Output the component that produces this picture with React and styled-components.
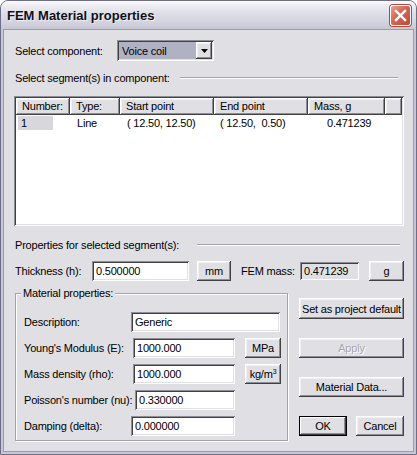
import React from "react";
import styled, { createGlobalStyle, css } from "styled-components";

const Global = createGlobalStyle`
  html, body { margin: 0; padding: 0; background: #ffffff; overflow: hidden; }
  * { box-sizing: border-box; }
  body { font-family: "Liberation Sans", Arial, sans-serif; font-size: 11px; color: #000; }
`;

const FONT = css`
  font-family: "Liberation Sans", Arial, sans-serif;
  font-size: 11px;
  letter-spacing: -0.2px;
  color: #000;
`;

const raised = css`
  box-shadow: inset -1px -1px 0 #404040, inset 1px 1px 0 #ffffff,
    inset -2px -2px 0 #8e8e96, inset 2px 2px 0 #f1f0f3;
`;

const sunken = css`
  box-shadow: inset 1px 1px 0 #8e8e96, inset -1px -1px 0 #ffffff,
    inset 2px 2px 0 #404040, inset -2px -2px 0 #e0dfe3;
`;

const Window = styled.div`
  width: 417px;
  height: 455px;
  display: flex;
  flex-direction: column;
  border: 1px solid #6e6e88;
  border-radius: 8px 8px 0 0;
  background: #c6c6d6;
  overflow: hidden;
`;

const TitleBar = styled.div`
  height: 28px;
  flex-shrink: 0;
  display: flex;
  align-items: center;
  justify-content: space-between;
  padding: 0 5px 0 6px;
  background: linear-gradient(
    to bottom,
    #fbfbfd 0%,
    #ececf2 18%,
    #dedee8 45%,
    #d4d4e0 75%,
    #c6c6d6 100%
  );
`;

const Title = styled.span`
  font-family: "Liberation Sans", Arial, sans-serif;
  font-weight: bold;
  font-size: 13px;
  color: #101018;
  text-shadow: 1px 1px 0 rgba(255, 255, 255, 0.6);
  padding-top: 1px;
`;

const CloseButton = styled.div`
  width: 21px;
  height: 21px;
  margin-top: 1px;
  border-radius: 3px;
  border: 1px solid #ffffff;
  background: linear-gradient(135deg, #e7a394 0%, #d66a58 40%, #c24634 100%);
  box-shadow: 0 0 0 1px #b04a40;
  display: flex;
  align-items: center;
  justify-content: center;
`;

const Client = styled.div`
  flex: 1;
  margin: 0 2px 2px 2px;
  border: 1px solid #9a9ab0;
  background: #e0dfe3;
  padding: 10px 9px 0 11px;
  display: flex;
  flex-direction: column;
`;

const Row = styled.div`
  display: flex;
  align-items: center;
  height: ${(p) => p.$h || 20}px;
  margin-top: ${(p) => p.$mt || 0}px;
  flex-shrink: 0;
`;

const Label = styled.span`
  ${FONT};
  white-space: nowrap;
  width: ${(p) => (p.$w ? `${p.$w}px` : "auto")};
  margin-left: ${(p) => p.$ml || 0}px;
  flex-shrink: 0;
`;

const Combo = styled.div`
  ${sunken};
  width: 97px;
  height: 21px;
  margin-left: ${(p) => p.$ml}px;
  background: #b0b1c2;
  display: flex;
  align-items: center;
  padding: 2px 2px 2px 5px;
`;

const ComboText = styled.span`
  ${FONT};
  flex: 1;
`;

const ComboArrow = styled.div`
  ${raised};
  width: 16px;
  height: 17px;
  background: #e0dfe3;
  display: flex;
  align-items: center;
  justify-content: center;
`;

const Heading = styled.div`
  display: flex;
  align-items: center;
  height: 14px;
  margin-top: ${(p) => p.$mt}px;
  flex-shrink: 0;
`;

const HeadingLine = styled.div`
  flex: 1;
  height: 2px;
  margin-left: ${(p) => p.$gap}px;
  margin-right: ${(p) => p.$mr}px;
  border-top: 1px solid #a2a2aa;
  border-bottom: 1px solid #ffffff;
`;

const ListBox = styled.div`
  ${sunken};
  margin: 11px 0 0 -1px;
  width: 390px;
  height: 130px;
  background: #ffffff;
  padding: 2px;
  flex-shrink: 0;
`;

const HeaderRow = styled.div`
  display: flex;
  height: 17px;
`;

const HeaderCell = styled.div`
  ${raised};
  ${FONT};
  width: ${(p) => p.$w}px;
  flex: ${(p) => (p.$grow ? 1 : "none")};
  background: #e0dfe3;
  padding: 0 0 0 6px;
  line-height: 17px;
  white-space: nowrap;
  overflow: hidden;
`;

const DataRow = styled.div`
  display: flex;
  height: 14px;
  margin-top: 1px;
`;

const DataCell = styled.div`
  ${FONT};
  width: ${(p) => p.$w}px;
  padding-left: ${(p) => p.$pl}px;
  line-height: 14px;
  white-space: pre;
`;

const Selected = styled.span`
  display: inline-block;
  width: 35px;
  height: 14px;
  margin-left: 2px;
  padding-left: 3px;
  background: #d8d8dc;
`;

const TextField = styled.div`
  ${sunken};
  ${FONT};
  width: ${(p) => p.$w}px;
  height: ${(p) => p.$h || 20}px;
  margin-left: ${(p) => p.$ml || 0}px;
  background: ${(p) => (p.$readonly ? "#e0dfe3" : "#ffffff")};
  padding: 0 0 0 4px;
  line-height: ${(p) => p.$h || 20}px;
  flex-shrink: 0;
  white-space: nowrap;
`;

const Button = styled.div`
  ${FONT};
  ${(p) =>
    p.$default
      ? css`
          box-shadow: inset 0 0 0 1px #000000, inset -2px -2px 0 #404040,
            inset 2px 2px 0 #ffffff, inset -3px -3px 0 #8e8e96;
        `
      : raised};
  width: ${(p) => (p.$w ? `${p.$w}px` : "auto")};
  height: ${(p) => p.$h || 20}px;
  margin-left: ${(p) => p.$ml || 0}px;
  background: #e0dfe3;
  display: flex;
  align-items: center;
  justify-content: center;
  white-space: nowrap;
  flex-shrink: 0;
  color: ${(p) => (p.$disabled ? "#a6a6ae" : "#000")};
  text-shadow: ${(p) => (p.$disabled ? "1px 1px 0 #ffffff" : "none")};
`;

const Bottom = styled.div`
  display: grid;
  grid-template-columns: 273px 105px;
  column-gap: 11px;
  margin-top: 5px;
  align-items: start;
`;

const Group = styled.fieldset`
  margin: 0;
  min-width: 0;
  padding: 12px 7px 4px 8px;
  border: 1px solid #a2a2aa;
  box-shadow: inset 1px 1px 0 #ffffff, 1px 1px 0 #ffffff;
  display: flex;
  flex-direction: column;
  gap: 6px;
`;

const Legend = styled.legend`
  ${FONT};
  line-height: 14px;
  padding: 0 2px;
  margin-left: -3px;
  background: #e0dfe3;
`;

const SideColumn = styled.div`
  display: flex;
  flex-direction: column;
  padding-top: 12px;
  gap: 19px;
`;

const ButtonPair = styled.div`
  display: flex;
  justify-content: space-between;
`;

const Sup = styled.sup`
  font-size: 7px;
  vertical-align: 4px;
  line-height: 0;
`;

const columns = [
  { title: "Number:", w: 54 },
  { title: "Type:", w: 50 },
  { title: "Start point", w: 94 },
  { title: "End point", w: 94 },
  { title: "Mass, g", w: 77 },
];

const materialRows = [
  { label: "Description:", value: "Generic", ml: 0, w: 149 },
  { label: "Young's Modulus (E):", value: "1000.000", ml: 2, w: 102, unit: "MPa" },
  { label: "Mass density (rho):", value: "1000.000", ml: 2, w: 102, unit: "kg/m3" },
  { label: "Poisson's number (nu):", value: "0.330000", ml: 4, w: 100 },
  { label: "Damping (delta):", value: "0.000000", ml: 0, w: 104 },
];

export default function App() {
  return (
    <>
      <Global />
      <Window>
        <TitleBar>
          <Title>FEM Material properties</Title>
          <CloseButton>
            <svg width="13" height="13" viewBox="0 0 13 13">
              <path
                d="M2 2 L11 11 M11 2 L2 11"
                stroke="#ffffff"
                strokeWidth="2.4"
                strokeLinecap="square"
              />
            </svg>
          </CloseButton>
        </TitleBar>
        <Client>
          <Row $h={21}>
            <Label $w={102}>Select component:</Label>
            <Combo $ml={0}>
              <ComboText>Voice coil</ComboText>
              <ComboArrow>
                <svg width="7" height="4" viewBox="0 0 7 4">
                  <path d="M0 0 H7 L3.5 4 Z" fill="#000" />
                </svg>
              </ComboArrow>
            </Combo>
          </Row>

          <Heading $mt={10}>
            <Label>Select segment(s) in component:</Label>
            <HeadingLine $gap={10} $mr={6} />
          </Heading>

          <ListBox>
            <HeaderRow>
              {columns.map((c) => (
                <HeaderCell key={c.title} $w={c.w}>
                  {c.title}
                </HeaderCell>
              ))}
              <HeaderCell $grow />
            </HeaderRow>
            <DataRow>
              <DataCell $w={54} $pl={0}>
                <Selected>1</Selected>
              </DataCell>
              <DataCell $w={50} $pl={7}>Line</DataCell>
              <DataCell $w={94} $pl={7}>( 12.50, 12.50)</DataCell>
              <DataCell $w={94} $pl={6}>( 12.50,  0.50)</DataCell>
              <DataCell $w={77} $pl={19}>0.471239</DataCell>
            </DataRow>
          </ListBox>

          <Heading $mt={12}>
            <Label>Properties for selected segment(s):</Label>
            <HeadingLine $gap={18} $mr={4} />
          </Heading>

          <Row $mt={9}>
            <Label $w={77}>Thickness (h):</Label>
            <TextField $w={97}>0.500000</TextField>
            <Button $w={34} $ml={8}>mm</Button>
            <Label $ml={10} $w={59}>FEM mass:</Label>
            <TextField $w={59} $h={18} $readonly>0.471239</TextField>
            <Button $w={35} $ml={10}>g</Button>
          </Row>

          <Bottom>
            <Group>
              <Legend>Material properties:</Legend>
              {materialRows.map((r) => (
                <Row key={r.label}>
                  <Label $w={107}>{r.label}</Label>
                  <TextField $w={r.w} $ml={r.ml}>
                    {r.value}
                  </TextField>
                  {r.unit && (
                    <Button $w={36} $ml={10}>
                      {r.unit === "kg/m3" ? (
                        <span>
                          kg/m<Sup>3</Sup>
                        </span>
                      ) : (
                        r.unit
                      )}
                    </Button>
                  )}
                </Row>
              ))}
            </Group>
            <SideColumn>
              <Button $h={21}>Set as project default</Button>
              <Button $disabled>Apply</Button>
              <Button>Material Data...</Button>
              <ButtonPair>
                <Button $w={48} $default>OK</Button>
                <Button $w={48}>Cancel</Button>
              </ButtonPair>
            </SideColumn>
          </Bottom>
        </Client>
      </Window>
    </>
  );
}
